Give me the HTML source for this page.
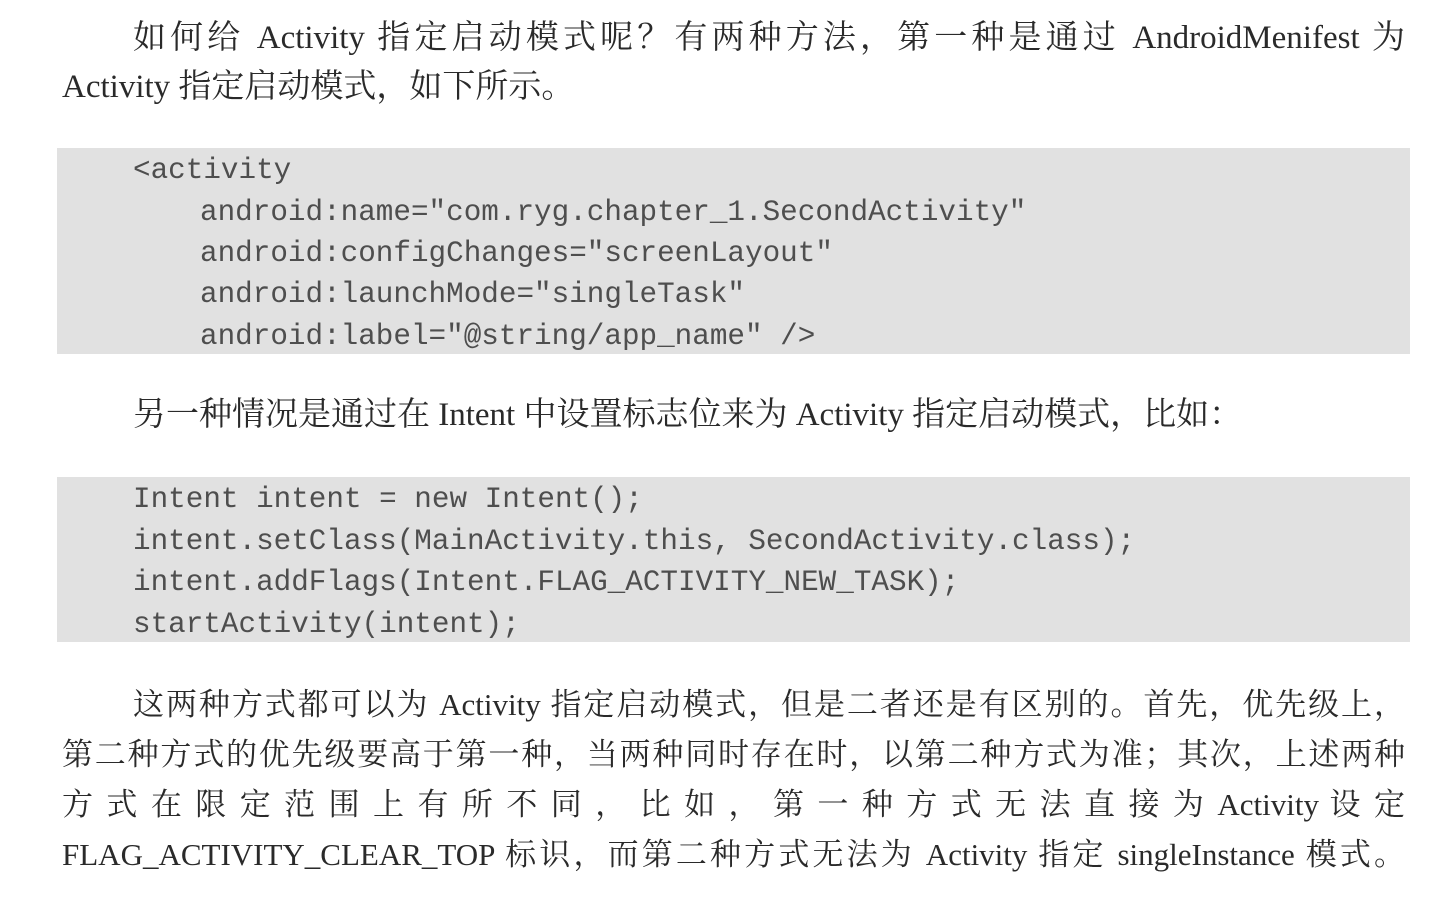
<!DOCTYPE html>
<html><head><meta charset="utf-8"><style>
html,body{margin:0;padding:0;background:#fff;}
body{width:1448px;height:908px;position:relative;overflow:hidden;}
.t{position:absolute;left:62px;width:1343px;height:40px;line-height:40px;font-family:"Liberation Serif","Noto Serif CJK SC",serif;font-size:33px;color:#2a2a2a;text-align:justify;text-align-last:justify;}
.s{font-size:31px;}
.n{text-align-last:left;}
.ind{padding-left:71px;width:1272px;}
.cb{position:absolute;left:57px;width:1353px;background:#e1e1e1;}
.c{position:absolute;font-family:"Liberation Mono",monospace;font-size:29.3px;line-height:36px;color:#4e4e4e;white-space:pre;}
</style></head><body>
<div class="t ind" style="top:18px">如何给 Activity 指定启动模式呢？有两种方法，第一种是通过 AndroidMenifest 为</div>
<div class="t n" style="top:67px">Activity 指定启动模式，如下所示。</div>
<div class="cb" style="top:148px;height:206px"></div>
<div class="c" style="left:133px;top:153px">&lt;activity</div>
<div class="c" style="left:200px;top:195px">android:name="com.ryg.chapter_1.SecondActivity"</div>
<div class="c" style="left:200px;top:236px">android:configChanges="screenLayout"</div>
<div class="c" style="left:200px;top:277px">android:launchMode="singleTask"</div>
<div class="c" style="left:200px;top:319px">android:label="@string/app_name" /&gt;</div>
<div class="t ind n" style="top:395px">另一种情况是通过在 Intent 中设置标志位来为 Activity 指定启动模式，比如：</div>
<div class="cb" style="top:477px;height:165px"></div>
<div class="c" style="left:133px;top:482px">Intent intent = new Intent();</div>
<div class="c" style="left:133px;top:524px">intent.setClass(MainActivity.this, SecondActivity.class);</div>
<div class="c" style="left:133px;top:565px">intent.addFlags(Intent.FLAG_ACTIVITY_NEW_TASK);</div>
<div class="c" style="left:133px;top:607px">startActivity(intent);</div>
<div class="t ind s" style="top:685px">这两种方式都可以为 Activity 指定启动模式，但是二者还是有区别的。首先，优先级上，</div>
<div class="t s" style="top:735px">第二种方式的优先级要高于第一种，当两种同时存在时，以第二种方式为准；其次，上述两种</div>
<div class="t s" style="top:785px">方 式 在 限 定 范 围 上 有 所 不 同 ， 比 如 ， 第 一 种 方 式 无 法 直 接 为 Activity 设 定</div>
<div class="t s" style="top:835px">FLAG_ACTIVITY_CLEAR_TOP 标识，而第二种方式无法为 Activity 指定 singleInstance 模式。</div>
</body></html>
